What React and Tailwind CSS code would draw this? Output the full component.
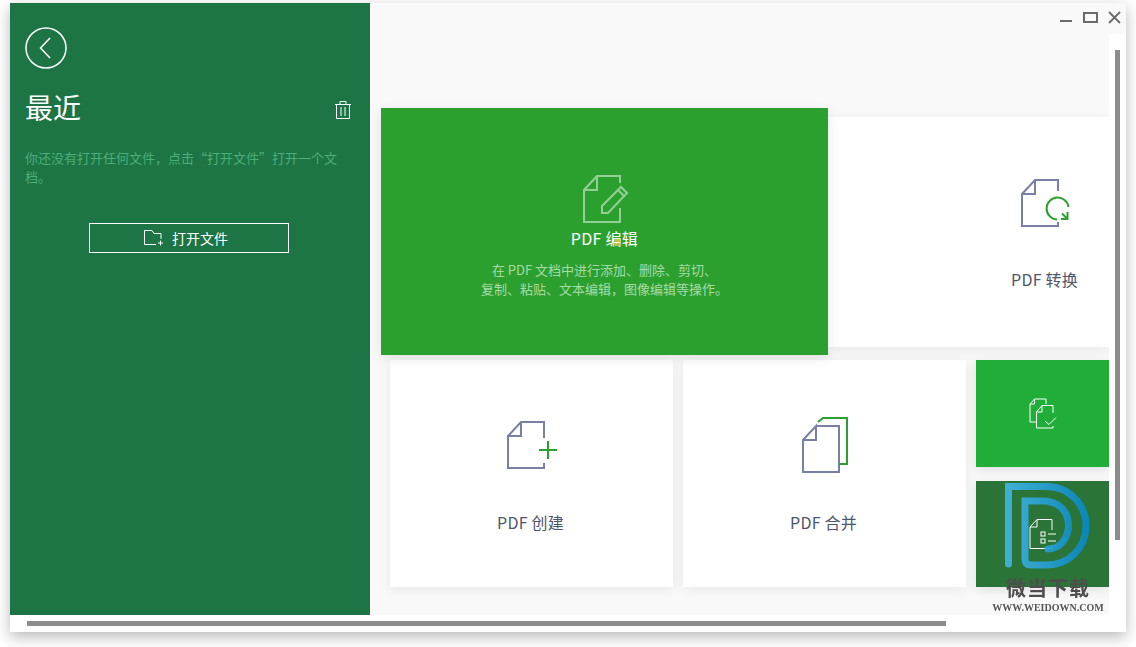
const font = { fontFamily: '"Noto Sans CJK SC", "Noto Sans", sans-serif' }

function BigCard({ label, className, children }) {
  return (
    <div className={`bg-white shadow-[0_3px_12px_rgba(0,0,0,0.07)] flex flex-col items-center ${className}`}>
      {children}
      <p className="mr-[2px] text-[16px] leading-[20px] tracking-[0.2px] text-[#50566a]">{label}</p>
    </div>
  )
}

export default function App() {
  return (
    <div className="w-[1136px] h-[647px] bg-white overflow-hidden pl-[10px] pt-[3px]" style={font}>
      <div className="relative w-[1116px] h-[629px] bg-white flex flex-col shadow-[0_5px_14px_rgba(0,0,0,0.28)]">
        <div className="flex h-[612px]">

          {/* Recent panel */}
          <div className="w-[360px] bg-[#1d7546] pl-[15px] pr-[18px] pt-[24px]">
            <svg width="42" height="42" viewBox="0 0 42 42" fill="none" stroke="white">
              <circle cx="21" cy="21" r="20" strokeWidth="1.5" />
              <path d="M25 11 L15.5 21 L25 31" strokeWidth="1.5" />
            </svg>
            <div className="flex items-center justify-between mt-[18px] h-[40px]">
              <h1 className="text-[28px] leading-[40px] text-white">最近</h1>
              <svg width="18" height="20" viewBox="0 0 18 20" fill="none" stroke="white" strokeWidth="1" className="mt-[5px]">
                <path d="M1 4.5H17 M6 4.5V1.5H12V4.5 M2.5 4.5V18.5H15.5V4.5 M7 7V16 M11 7V16" />
              </svg>
            </div>
            <p className="mt-[21px] pr-[10px] text-[13px] leading-[19px] text-[#4cae78]">
              你还没有打开任何文件，点击“打开文件”打开一个文档。
            </p>
            <button className="ml-[64px] mt-[37px] w-[200px] h-[30px] border border-white flex items-center justify-center gap-[8px] pr-[6px] text-[14px] text-white">
              <svg width="20" height="16" viewBox="0 0 20 16" fill="none" stroke="white" strokeWidth="1">
                <path d="M12 14.5H0.5V0.5H8L10 3.5H17V9 M14 13H19 M16.5 10.5V15.5" />
              </svg>
              打开文件
            </button>
          </div>

          <div className="flex-1 flex flex-col">
            {/* Window controls */}
            <div className="h-[31px] bg-[#f9f9f9] flex items-start justify-end pr-[4px] pt-[8px]">
              <svg width="62" height="13" viewBox="0 0 62 13" fill="none" stroke="#6b6b6b" strokeWidth="2">
                <path d="M0 10H12" />
                <rect x="24" y="2" width="13" height="9" />
                <path d="M49 1L60 12M60 1L49 12" strokeWidth="1.8" />
              </svg>
            </div>

            <div className="flex-1 flex">
              {/* Feature cards */}
              <div className="w-[739px] bg-[#f9f9f9] pt-[74px]">
                <div className="flex items-center pl-[11px]">
                  <div className="relative z-10 w-[447px] h-[247px] bg-[#2ca02f] flex flex-col items-center pt-[67px] shadow-[0_3px_12px_rgba(0,0,0,0.1)]">
                    <svg width="46" height="48" viewBox="0 0 46 48" fill="none" stroke="#94cf96" strokeWidth="2" className="ml-[2px]">
                      <path d="M14 1H37V8 M37 33V47H1V15L14 1V15H1" />
                      <path d="M19 38V31L38 12L44 18L25 38Z M35 15L41 21" />
                    </svg>
                    <p className="mt-[5px] text-[16px] leading-[20px] tracking-[0.3px] text-white">PDF 编辑</p>
                    <p className="mt-[12px] text-[13px] leading-[19px] text-[#a6dba8] text-center">
                      在 PDF 文档中进行添加、删除、剪切、<br />
                      复制、粘贴、文本编辑，图像编辑等操作。
                    </p>
                  </div>
                  <BigCard label="PDF 转换" className="w-[281px] h-[230px] pt-[62px] pl-[154px]">
                    <svg width="50" height="48" viewBox="0 0 50 48" fill="none" stroke="#7a80a5" strokeWidth="2" className="mb-[42px]">
                      <path d="M14 1H37V12 M37 43V47H1V15L14 1V15H1" />
                      <path d="M36 40.5A11 11 0 1 1 47.5 28" stroke="#2ca02f" />
                      <path d="M46.5 33V40H40 M46.5 40L41 34.5" stroke="#2ca02f" />
                    </svg>
                  </BigCard>
                </div>

                <div className="flex gap-[10px] pl-[20px] mt-[5px]">
                  <BigCard label="PDF 创建" className="w-[283px] h-[227px] pt-[61px]">
                    <svg width="51" height="48" viewBox="0 0 51 48" fill="none" stroke="#7a80a5" strokeWidth="2" className="mb-[43px] ml-[2px]">
                      <path d="M14 1H37V17 M37 42V47H1V15L14 1V15H1" />
                      <path d="M32 29H50 M41 20V38" stroke="#2ca02f" />
                    </svg>
                  </BigCard>
                  <BigCard label="PDF 合并" className="w-[283px] h-[227px] pt-[57px]">
                    <svg width="47" height="56" viewBox="0 0 47 56" fill="none" stroke="#7a80a5" strokeWidth="2" className="mb-[39px] ml-[2px]">
                      <path d="M14 9H37V55H1V23L14 9V23H1" />
                      <path d="M16 5L21 1H45V47H37" stroke="#2ca02f" />
                    </svg>
                  </BigCard>
                  <div className="w-[133px] flex flex-col gap-[14px]">
                    <div className="h-[107px] bg-[#20ae38] flex items-center justify-center shadow-[0_3px_10px_rgba(0,0,0,0.1)]">
                      <svg width="28" height="32" viewBox="0 0 28 32" fill="none" stroke="white" strokeWidth="1">
                        <path d="M5.5 1H17V6 M7 24H1V6L5.5 1V6H1" />
                        <path d="M13 7.5H24V15 M24 28V30H7.5V14L13 7.5V14H7.5" />
                        <path d="M16 23L20 26.5L27 19.5" />
                      </svg>
                    </div>
                    <div className="h-[106px] bg-[#2a7437] flex items-center justify-center shadow-[0_3px_10px_rgba(0,0,0,0.1)]">
                      <svg width="28" height="32" viewBox="0 0 28 32" fill="none" stroke="white" strokeWidth="1">
                        <path d="M8 1.5H23V12 M23 27V30.5H1V9L8 1.5V9H1" />
                        <rect x="12" y="14" width="4" height="4" />
                        <rect x="12" y="21" width="4" height="4" />
                        <path d="M19 16H27 M19 23H27" />
                      </svg>
                    </div>
                  </div>
                </div>
              </div>

              {/* Vertical scrollbar */}
              <div className="flex-1 bg-white pl-[6px] pt-[16px]">
                <div className="w-[5px] h-[490px] bg-[#8c8c8c]" />
              </div>
            </div>
          </div>
        </div>

        {/* Horizontal scrollbar */}
        <div className="flex-1 pl-[17px] pt-[6px]">
          <div className="w-[919px] h-[5px] bg-[#8c8c8c]" />
        </div>

        {/* Watermark */}
        <div className="absolute left-[978px] top-[479px] w-[120px] flex flex-col items-center pointer-events-none">
          <svg width="90" height="90" viewBox="1003 482 90 90" fill="none" strokeWidth="7" strokeLinecap="round" className="mb-[2px] opacity-90">
            <defs>
              <linearGradient id="wm" x1="0" y1="0" x2="1" y2="0">
                <stop offset="0" stopColor="#42b6e5" />
                <stop offset="1" stopColor="#0a8ac6" />
              </linearGradient>
            </defs>
            <path stroke="url(#wm)" d="M1008.5 564V486.5H1046C1070 486.5 1086 505 1086 526C1086 547 1070 565 1046 565H1031Q1025 565 1025 559V501H1043C1060 501 1068.5 513 1068.5 525C1068.5 538 1060 549 1048 549" />
          </svg>
          <p className="text-[20px] leading-[28px] font-bold tracking-[1px] text-[#4d4d4d] blur-[0.5px]">微当下载</p>
          <p className="text-[10px] leading-[12px] font-bold text-[#555] blur-[0.3px] whitespace-nowrap" style={{ fontFamily: '"Liberation Serif", serif' }}>WWW.WEIDOWN.COM</p>
        </div>
      </div>
    </div>
  )
}
